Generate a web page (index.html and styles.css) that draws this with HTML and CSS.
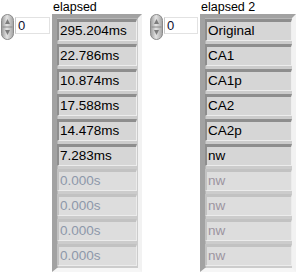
FILE: index.html
```html
<!DOCTYPE html>
<html lang="en">
<head>
  <meta charset="UTF-8">
  <title>elapsed</title>
  <link rel="stylesheet" href="styles.css">
</head>
<body>

  <div class="panel">

    <!-- array: elapsed -->
    <div class="ctl ctl-left">
      <div class="index">
        <svg class="spin" width="13" height="26" viewBox="0 0 13 26">
          <defs>
            <linearGradient id="sg1" x1="0" y1="0" x2="1" y2="0">
              <stop offset="0" stop-color="#9a9a9a"/>
              <stop offset="0.45" stop-color="#e4e4e4"/>
              <stop offset="1" stop-color="#a2a2a2"/>
            </linearGradient>
          </defs>
          <rect x="0.5" y="0.5" width="12" height="25" rx="6" fill="url(#sg1)" stroke="#8a8a8a"/>
          <line x1="1.5" y1="13" x2="11.5" y2="13" stroke="#8a8a8a"/>
          <path d="M6.5 5 L9 10 L4 10 Z" fill="#7c7c7c"/>
          <path d="M6.5 21 L9 16 L4 16 Z" fill="#7c7c7c"/>
        </svg>
        <div class="idx-input">0</div>
      </div>
      <div class="array">
        <div class="label">elapsed</div>
        <div class="frame">
          <div class="cell">295.204ms</div>
          <div class="cell">22.786ms</div>
          <div class="cell">10.874ms</div>
          <div class="cell">17.588ms</div>
          <div class="cell">14.478ms</div>
          <div class="cell">7.283ms</div>
          <div class="cell off">0.000s</div>
          <div class="cell off">0.000s</div>
          <div class="cell off">0.000s</div>
          <div class="cell off">0.000s</div>
        </div>
      </div>
    </div>

    <!-- array: elapsed 2 -->
    <div class="ctl ctl-right">
      <div class="index">
        <svg class="spin" width="13" height="26" viewBox="0 0 13 26">
          <defs>
            <linearGradient id="sg2" x1="0" y1="0" x2="1" y2="0">
              <stop offset="0" stop-color="#9a9a9a"/>
              <stop offset="0.45" stop-color="#e4e4e4"/>
              <stop offset="1" stop-color="#a2a2a2"/>
            </linearGradient>
          </defs>
          <rect x="0.5" y="0.5" width="12" height="25" rx="6" fill="url(#sg2)" stroke="#8a8a8a"/>
          <line x1="1.5" y1="13" x2="11.5" y2="13" stroke="#8a8a8a"/>
          <path d="M6.5 5 L9 10 L4 10 Z" fill="#7c7c7c"/>
          <path d="M6.5 21 L9 16 L4 16 Z" fill="#7c7c7c"/>
        </svg>
        <div class="idx-input">0</div>
      </div>
      <div class="array">
        <div class="label">elapsed 2</div>
        <div class="frame">
          <div class="cell">Original</div>
          <div class="cell">CA1</div>
          <div class="cell">CA1p</div>
          <div class="cell">CA2</div>
          <div class="cell">CA2p</div>
          <div class="cell">nw</div>
          <div class="cell off">nw</div>
          <div class="cell off">nw</div>
          <div class="cell off">nw</div>
          <div class="cell off">nw</div>
        </div>
      </div>
    </div>

  </div>

</body>
</html>
```

FILE: styles.css
```css
body {
  margin: 0;
  background-color: #ffffff;
  font-family: "Liberation Sans", Arial, sans-serif;
  font-size: 13px;
  color: #000000;
}

.panel {
  display: flex;
  align-items: flex-start;
}

.ctl {
  display: flex;
  align-items: flex-start;
}

.ctl-left {
  margin-left: 1px;
}

.ctl-right {
  margin-left: 8px;
}

.index {
  display: flex;
  align-items: flex-start;
  margin-top: 14px;
}

.spin {
  display: block;
}

.idx-input {
  margin-top: 3px;
  margin-left: 1px;
  margin-right: 2px;
  width: 35px;
  height: 17px;
  box-sizing: border-box;
  background-color: #ffffff;
  border: 1px solid #e2e2e2;
  border-left-color: #c8c8c8;
  padding-left: 2px;
  font-size: 13px;
  line-height: 15px;
  color: #101030;
}

.ctl-right .idx-input {
  width: 34px;
}

.label {
  height: 14px;
  line-height: 13px;
  font-size: 12.5px;
  padding-left: 1px;
  padding-top: 1px;
  box-sizing: border-box;
}

.frame {
  display: flex;
  flex-direction: column;
  gap: 3px;
  background-color: #cccccc;
  border-style: solid;
  border-width: 4px 4px 4px 5px;
  border-color: #a2a2a2 #f2f2f2 #f6f6f6 #a2a2a2;
  box-shadow: inset 1px 1px 0 #b6b6b6;
  padding: 1px 1px 2px 0;
  width: 90px;
  box-sizing: border-box;
}

.ctl-right .frame {
  width: 96px;
  padding-right: 0;
}

.cell {
  height: 22px;
  box-sizing: border-box;
  background-color: #d6d6d6;
  border-style: solid;
  border-width: 3px 1px 1px 2px;
  border-color: #8e8e8e #efefef #ececec #8e8e8e;
  padding-left: 1px;
  font-size: 13.5px;
  line-height: 18px;
  white-space: nowrap;
  overflow: hidden;
}

.cell.off {
  background-color: #dddddd;
  border-color: #c2c2c2 #ececec #ececec #c2c2c2;
  color: #8d98aa;
}

.ctl-right .cell.off {
  color: #9c94a0;
}
```
